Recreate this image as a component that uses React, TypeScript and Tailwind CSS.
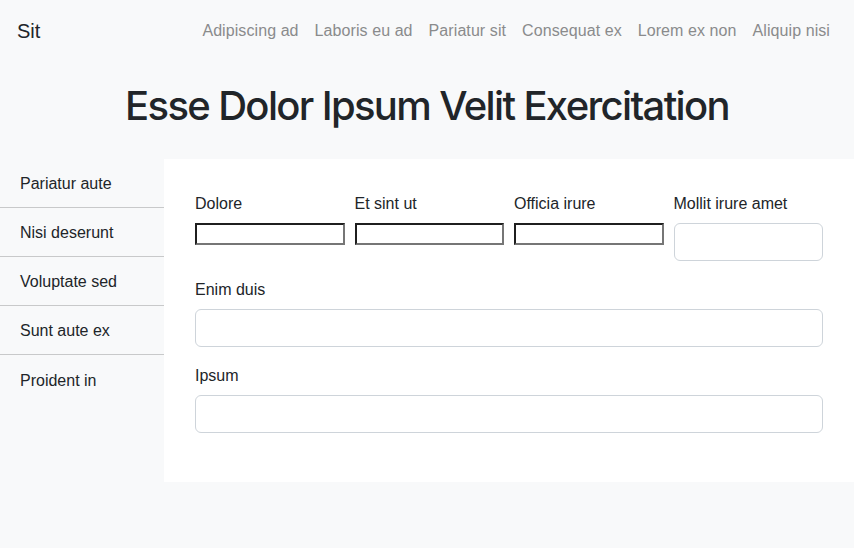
import React from 'react';

const NAV_LINKS = ['Adipiscing ad', 'Laboris eu ad', 'Pariatur sit', 'Consequat ex', 'Lorem ex non', 'Aliquip nisi'];
const SIDE_ITEMS = ['Pariatur aute', 'Nisi deserunt', 'Voluptate sed', 'Sunt aute ex', 'Proident in'];

function RawInput() {
  return (
    <input
      type="text"
      className="block w-full h-[22px] bg-white border-2 border-t-[#1f1f1f] border-l-[#1f1f1f] border-b-[#767676] border-r-[#767676]"
    />
  );
}

function FormInput() {
  return (
    <input
      type="text"
      className="block w-full h-[38px] bg-white border border-[#ced4da] rounded-[6px] px-3"
    />
  );
}

function Label({ children }: { children: React.ReactNode }) {
  return <label className="block text-[16px] leading-6 pt-px mb-[7px]">{children}</label>;
}

export default function App() {
  return (
    <div
      className="min-h-[548px] bg-[#f8f9fa] text-[#212529]"
      style={{ fontFamily: '"Liberation Sans", Arial, sans-serif' }}
    >
      {/* Navbar */}
      <nav className="h-[60px] flex items-center justify-between pl-[17px] pr-4 pt-0.5">
        <span className="text-[20px] leading-[30px]">Sit</span>
        <div className="flex">
          {NAV_LINKS.map((l) => (
            <a key={l} className="px-2 text-[16px] leading-6 text-[#8a8b8c] cursor-pointer tracking-[0.08px]">{l}</a>
          ))}
        </div>
      </nav>

      {/* Hero */}
      <div className="h-[99px] flex items-center justify-center pb-2">
        <h1
          className="text-[40px] leading-[48px] font-medium tracking-[-1.65px]"
          style={{ fontFamily: 'Inter, "Liberation Sans", sans-serif' }}
        >
          Esse Dolor Ipsum Velit Exercitation
        </h1>
      </div>

      {/* Body */}
      <div className="flex">
        <aside className="w-[164px] shrink-0">
          {SIDE_ITEMS.map((s, i) => (
            <div
              key={s}
              className={
                'h-[49px] pl-5 pt-0.5 flex items-center text-[16px] ' +
                (i < SIDE_ITEMS.length - 1 ? 'border-b border-[#c8c9ca]' : '')
              }
            >
              {s}
            </div>
          ))}
        </aside>

        <main className="flex-1 bg-white pt-8 pb-[49px] pl-[31px] pr-[31px]">
          <div className="grid grid-cols-4 gap-x-[10px] mb-4 items-start">
            {['Dolore', 'Et sint ut', 'Officia irure'].map((l) => (
              <div key={l}>
                <Label>{l}</Label>
                <RawInput />
              </div>
            ))}
            <div>
              <Label>Mollit irure amet</Label>
              <FormInput />
            </div>
          </div>

          <div className="mb-4">
            <Label>Enim duis</Label>
            <FormInput />
          </div>

          <div>
            <Label>Ipsum</Label>
            <FormInput />
          </div>
        </main>
      </div>
    </div>
  );
}
